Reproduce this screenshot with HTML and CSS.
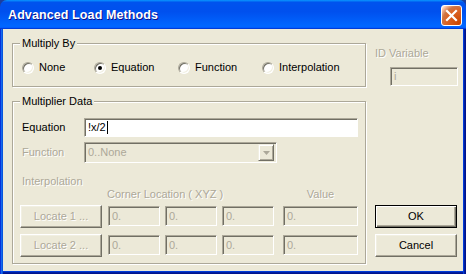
FILE: index.html
```html
<!DOCTYPE html>
<html lang="en">
<head>
    <meta charset="UTF-8">
    <title>Advanced Load Methods</title>
    <link rel="stylesheet" href="styles.css">
</head>
<body>
    <div class="window">
        <header class="titlebar">
            <span class="title">Advanced Load Methods</span>
            <button class="close" title="Close">
                <svg width="13" height="13" viewBox="0 0 13 13">
                    <path d="M2 2 L11 11 M11 2 L2 11" stroke="#fff" stroke-width="2.2" stroke-linecap="square"/>
                </svg>
            </button>
        </header>

        <div class="frame">
            <div class="content">
                <div class="main">
                    <section class="group multiply">
                        <div class="group-title">Multiply By</div>
                        <div class="radios">
                            <label class="radio-item"><span class="radio"></span>None</label>
                            <label class="radio-item"><span class="radio checked"></span>Equation</label>
                            <label class="radio-item"><span class="radio"></span>Function</label>
                            <label class="radio-item"><span class="radio"></span>Interpolation</label>
                        </div>
                    </section>

                    <section class="group data">
                        <div class="group-title">Multiplier Data</div>

                        <div class="row eq-row">
                            <span class="lbl">Equation</span>
                            <div class="field eq">!x/2<span class="caret"></span></div>
                        </div>

                        <div class="row fn-row">
                            <span class="lbl disabled">Function</span>
                            <div class="field combo">
                                <span class="combo-text">0..None</span>
                                <span class="combo-btn">
                                    <svg width="7" height="4" viewBox="0 0 7 4"><path d="M0 0 H7 L3.5 4 Z" fill="#ACA899"/></svg>
                                </span>
                            </div>
                        </div>

                        <div class="interp disabled">Interpolation</div>

                        <div class="coord-head">
                            <span class="corner disabled">Corner Location ( XYZ )</span>
                            <span class="value disabled">Value</span>
                        </div>

                        <div class="loc-row">
                            <button class="btn locate" disabled>Locate 1 ...</button>
                            <div class="field dis xyz">0.</div>
                            <div class="field dis xyz">0.</div>
                            <div class="field dis xyz">0.</div>
                            <div class="field dis val">0.</div>
                        </div>

                        <div class="loc-row second">
                            <button class="btn locate" disabled>Locate 2 ...</button>
                            <div class="field dis xyz">0.</div>
                            <div class="field dis xyz">0.</div>
                            <div class="field dis xyz">0.</div>
                            <div class="field dis val">0.</div>
                        </div>
                    </section>
                </div>

                <aside class="side">
                    <div class="id-label disabled">ID Variable</div>
                    <div class="field dis id">i</div>
                    <button class="btn default ok">OK</button>
                    <button class="btn cancel">Cancel</button>
                </aside>
            </div>
        </div>
    </div>
</body>
</html>
```

FILE: styles.css
```css
* {
    margin: 0;
    padding: 0;
    box-sizing: border-box;
}

body {
    background: #1c3e9e;
    font-family: 'Liberation Sans', Arial, sans-serif;
    font-size: 11px;
    line-height: 13px;
    color: #000;
}

.window {
    width: 466px;
    height: 274px;
    border-radius: 7px 7px 0 0;
    overflow: hidden;
}

/* title bar */
.titlebar {
    height: 29px;
    padding: 2px 4px 0 8px;
    display: flex;
    align-items: center;
    justify-content: space-between;
    background: linear-gradient(180deg, #0997ff, #0053ee 8%, #0050ee 40%, #0066ff 88%, #0066ff 93%, #005bff 95%, #003dd7 96%, #003dd7);
}

.title {
    color: #fff;
    font-weight: bold;
    font-size: 12.5px;
    letter-spacing: 0.1px;
    text-shadow: 1px 1px #0f1089;
}

.close {
    width: 21px;
    height: 21px;
    border: 1px solid #fff;
    border-radius: 3px;
    background: radial-gradient(circle at 90% 90%, #cc4600 0, #dc6527 55%, #cd7546 70%, #ffccb2 90%, #fff 100%);
    display: flex;
    align-items: center;
    justify-content: center;
}

/* window frame */
.frame {
    height: 245px;
    padding: 0 3px 3px;
    background: #0054e3;
    box-shadow: inset 1px 0 #0831d9, inset 2px 0 #166aee, inset 3px 0 #0855dd,
                inset -1px 0 #00138c, inset -2px 0 #001ea0, inset -3px 0 #003bda,
                inset 0 -1px #00138c, inset 0 -2px #001ea0, inset 0 -3px #003bda;
}

.content {
    height: 242px;
    background: #ece9d8;
    display: flex;
    padding-left: 9px;
}

.disabled {
    color: #aca899;
    text-shadow: 1px 1px #fff;
}

/* group boxes */
.main {
    width: 354px;
}

.group {
    border: 1px solid #aca899;
    box-shadow: inset 1px 1px #fff, 1px 1px #fff;
    margin-top: 14px;
}

.group-title {
    width: fit-content;
    margin: -7px 0 0 7px;
    padding: 0 2px;
    background: #ece9d8;
}

.radios {
    display: grid;
    grid-template-columns: 72px 84px 84px auto;
    padding: 11px 0 12px 9px;
}

.radio-item {
    display: flex;
    align-items: center;
    height: 13px;
}

.radio {
    width: 12px;
    height: 12px;
    margin-right: 5px;
    border-radius: 50%;
    background: #fff;
    border: 1px solid;
    border-color: #aca899 #fff #fff #aca899;
    box-shadow: inset 1px 1px #716f64, inset -1px -1px #f1efe2;
    position: relative;
}

.radio.checked::after {
    content: '';
    position: absolute;
    left: 3px;
    top: 3px;
    width: 4px;
    height: 4px;
    border-radius: 50%;
    background: #000;
}

/* fields */
.field {
    border: 1px solid;
    border-color: #aca899 #fff #fff #aca899;
    box-shadow: inset 1px 1px #716f64;
    background: #fff;
    padding: 0 0 0 3px;
    display: flex;
    align-items: center;
}

.field.dis {
    background: #ece9d8;
    color: #aca899;
}

.row {
    display: flex;
    align-items: center;
    padding-left: 9px;
}

.lbl {
    width: 62px;
}

.eq-row {
    margin-top: 10px;
}

.eq {
    width: 274px;
    height: 19px;
}

.caret {
    width: 1px;
    height: 13px;
    background: #000;
    margin-left: 1px;
}

.fn-row {
    margin-top: 5px;
}

.combo {
    width: 193px;
    height: 21px;
    background: #ece9d8;
    color: #aca899;
    justify-content: space-between;
    padding-right: 2px;
}

.combo-btn {
    width: 16px;
    height: 17px;
    border: 1px solid;
    border-color: #f1efe2 #716f64 #716f64 #f1efe2;
    box-shadow: inset 1px 1px #fff, inset -1px -1px #aca899;
    display: flex;
    align-items: center;
    justify-content: center;
    background: #ece9d8;
}

.interp {
    margin: 12px 0 0 9px;
}

.coord-head {
    display: flex;
    padding-left: 94px;
}

.coord-head .corner {
    width: 176px;
}

.coord-head .value {
    width: 75px;
    text-align: center;
}

.loc-row {
    display: flex;
    align-items: flex-start;
    margin-top: 4px;
    padding-left: 7px;
}

.loc-row.second {
    margin: 6px 0 6px;
}

.loc-row .field {
    height: 20px;
    margin-top: 1px;
}

.xyz {
    width: 52px;
    margin-left: 5px;
}

.locate + .xyz {
    margin-left: 6px;
}

.val {
    width: 75px;
    margin-left: 9px;
}

/* buttons */
.btn {
    width: 82px;
    height: 23px;
    font: inherit;
    background: #ece9d8;
    color: #000;
    border: 1px solid;
    border-color: #fff #716f64 #716f64 #fff;
    box-shadow: inset -1px -1px #aca899, inset 1px 1px #f1efe2;
}

.btn:disabled {
    color: #aca899;
    text-shadow: 1px 1px #fff;
}

.btn.default {
    border: 1px solid #000;
    box-shadow: inset 1px 1px #fff, inset -1px -1px #716f64, inset -2px -2px #aca899;
}

/* right column */
.side {
    margin-left: 9px;
    padding-top: 18px;
    display: flex;
    flex-direction: column;
}

.id {
    width: 68px;
    height: 19px;
    margin: 7px 0 0 15px;
}

.ok {
    margin-top: 119px;
}

.cancel {
    margin-top: 6px;
}
```
